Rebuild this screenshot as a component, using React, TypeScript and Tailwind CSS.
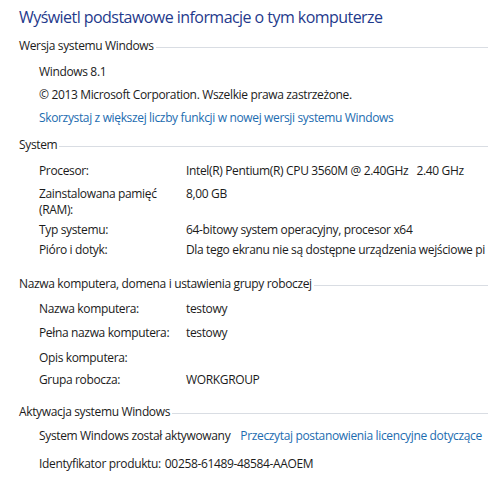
import React from "react";

const font = { fontFamily: '"Open Sans", "Noto Sans", sans-serif' };

const Heading = (props: { text: string; className?: string }) => {
	return (
		<div className={"flex items-center h-[16px] pl-[19px] " + (props.className || "")}>
			<span className="whitespace-nowrap pr-[2px]">{props.text}</span>
			<div className="flex-1 h-px bg-[#d9dde3] mt-[2px]"></div>
		</div>
	);
};

const Row = (props: { label: React.ReactNode; value?: React.ReactNode; className?: string }) => {
	return (
		<div className={"flex pl-[39px] leading-[16px] " + (props.className || "")}>
			<div className="w-[147px] shrink-0">{props.label}</div>
			<div className="whitespace-pre">{props.value}</div>
		</div>
	);
};

const App = () => {
	return (
		<div
			className="w-[488px] h-[495px] overflow-hidden bg-white text-[12px] text-[#1b1b1b] tracking-[-0.35px]"
			style={font}
		>
			<div className="pt-[5px] pl-[19px] h-[29px] leading-[24px] text-[16px] text-[#1f3a8c] tracking-[-0.55px] whitespace-nowrap">
				Wyświetl podstawowe informacje o tym komputerze
			</div>

			<Heading text="Wersja systemu Windows" className="mt-[9px]" />
			<div className="pl-[39px] leading-[16px] mt-[10px]">Windows 8.1</div>
			<div className="pl-[39px] leading-[16px] mt-[7px]">© 2013 Microsoft Corporation. Wszelkie prawa zastrzeżone.</div>
			<div className="pl-[39px] leading-[16px] mt-[7px] text-[#1c6cb0] whitespace-nowrap">
				Skorzystaj z większej liczby funkcji w nowej wersji systemu Windows
			</div>

			<Heading text="System" className="mt-[11px]" />
			<Row className="mt-[10px]" label="Procesor:" value="Intel(R) Pentium(R) CPU 3560M @ 2.40GHz   2.40 GHz" />
			<div className="flex pl-[39px] leading-[16px] mt-[7px]">
				<div className="w-[147px] shrink-0">
					<div>Zainstalowana pamięć</div>
					<div>(RAM):</div>
				</div>
				<div>8,00 GB</div>
			</div>
			<Row className="mt-[4px]" label="Typ systemu:" value="64-bitowy system operacyjny, procesor x64" />
			<Row className="mt-[4px]" label="Pióro i dotyk:" value="Dla tego ekranu nie są dostępne urządzenia wejściowe pi" />

			<Heading text="Nazwa komputera, domena i ustawienia grupy roboczej" className="mt-[18px]" />
			<Row className="mt-[9px]" label="Nazwa komputera:" value="testowy" />
			<Row className="mt-[8px]" label="Pełna nazwa komputera:" value="testowy" />
			<Row className="mt-[9px]" label="Opis komputera:" value="" />
			<Row className="mt-[6px]" label="Grupa robocza:" value="WORKGROUP" />

			<Heading text="Aktywacja systemu Windows" className="mt-[16px]" />
			<div className="flex pl-[39px] leading-[16px] mt-[8px] whitespace-nowrap">
				<span>System Windows został aktywowany</span>
				<span className="ml-[10px] text-[#1c6cb0]">Przeczytaj postanowienia licencyjne dotyczące</span>
			</div>
			<div className="flex pl-[39px] leading-[16px] mt-[12px] whitespace-nowrap">
				<span>Identyfikator produktu:</span>
				<span className="ml-[4px]">00258-61489-48584-AAOEM</span>
			</div>
		</div>
	);
};

export default App;
